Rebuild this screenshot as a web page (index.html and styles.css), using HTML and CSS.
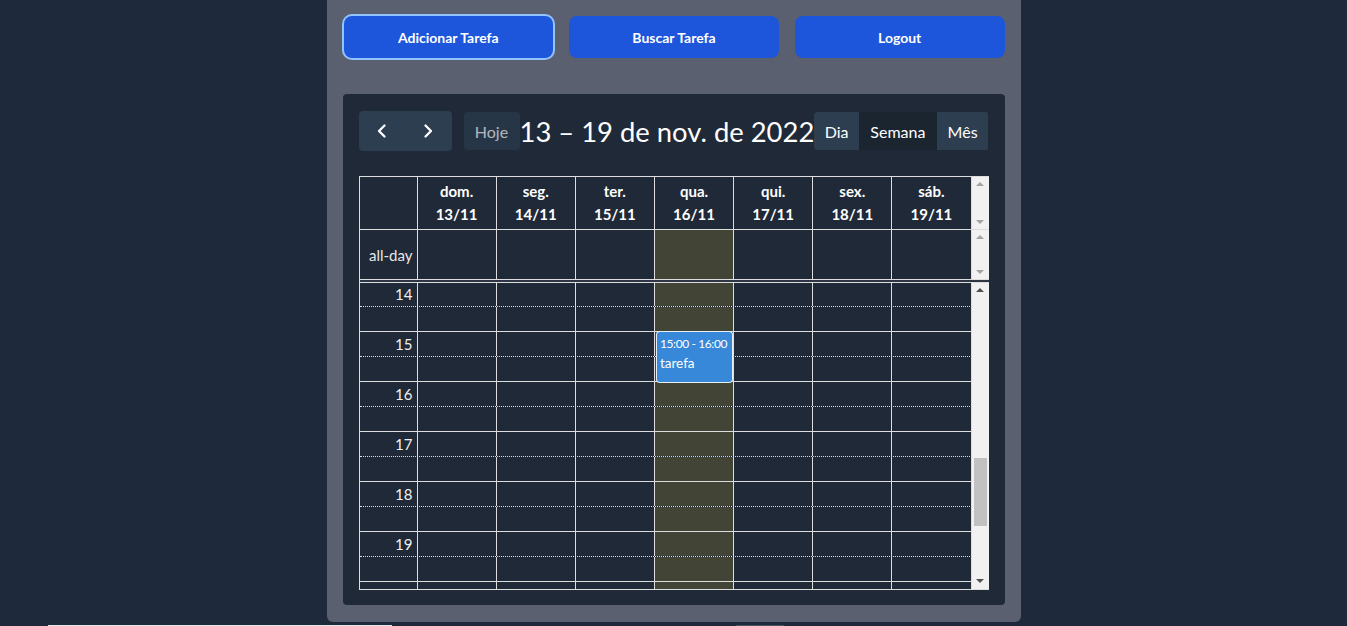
FILE: index.html
```html
<!DOCTYPE html>
<html lang="pt-BR">
<head>
<meta charset="utf-8">
<title>Agenda</title>
<link rel="stylesheet" href="styles.css">
</head>
<body>
<main class="panel">
  <div class="actions">
    <button class="btn btn-focus">Adicionar Tarefa</button>
    <button class="btn">Buscar Tarefa</button>
    <button class="btn">Logout</button>
  </div>
  <section class="card">
    <div class="toolbar">
      <div class="tb-chunk">
        <div class="btn-group nav">
          <button class="fc-btn icon-btn" aria-label="anterior"><svg width="16" height="16" viewBox="0 0 16 16"><path d="M10.5 2.5 L5 8 L10.5 13.5" fill="none" stroke="#fff" stroke-width="2.3" stroke-linecap="round" stroke-linejoin="round"/></svg></button>
          <button class="fc-btn icon-btn" aria-label="próximo"><svg width="16" height="16" viewBox="0 0 16 16"><path d="M5.5 2.5 L11 8 L5.5 13.5" fill="none" stroke="#fff" stroke-width="2.3" stroke-linecap="round" stroke-linejoin="round"/></svg></button>
        </div>
        <button class="fc-btn today-btn" disabled>Hoje</button>
      </div>
      <h2 class="title">13 – 19 de nov. de 2022</h2>
      <div class="btn-group views">
        <button class="fc-btn">Dia</button>
        <button class="fc-btn active">Semana</button>
        <button class="fc-btn">Mês</button>
      </div>
    </div>

    <div class="cal">
      <div class="row-wrap head">
        <div class="cols">
          <div class="cell axis"></div>
          <div class="cell dayhead">dom.<br>13/11</div>
          <div class="cell dayhead">seg.<br>14/11</div>
          <div class="cell dayhead">ter.<br>15/11</div>
          <div class="cell dayhead">qua.<br>16/11</div>
          <div class="cell dayhead">qui.<br>17/11</div>
          <div class="cell dayhead">sex.<br>18/11</div>
          <div class="cell dayhead">sáb.<br>19/11</div>
        </div>
        <div class="sb sb-light"><span class="arr up"></span><span class="arr down"></span></div>
      </div>
      <div class="row-wrap allday">
        <div class="cols">
          <div class="cell axis allday-label">all-day</div>
          <div class="cell"></div>
          <div class="cell"></div>
          <div class="cell"></div>
          <div class="cell today"></div>
          <div class="cell"></div>
          <div class="cell"></div>
          <div class="cell"></div>
        </div>
        <div class="sb sb-light"><span class="arr up"></span><span class="arr down"></span></div>
      </div>
      <div class="divider"></div>
      <div class="row-wrap body">
        <div class="slots">
          <div class="slot-list">
            <div class="cols slot half"><div class="cell axis hour">14</div><div class="cell"></div><div class="cell"></div><div class="cell"></div><div class="cell today"></div><div class="cell"></div><div class="cell"></div><div class="cell"></div></div>
            <div class="cols slot"><div class="cell axis"></div><div class="cell"></div><div class="cell"></div><div class="cell"></div><div class="cell today"></div><div class="cell"></div><div class="cell"></div><div class="cell"></div></div>
            <div class="cols slot half"><div class="cell axis hour">15</div><div class="cell"></div><div class="cell"></div><div class="cell"></div><div class="cell today evt-host"><div class="event"><div class="evt-time">15:00 - 16:00</div><div class="evt-title">tarefa</div></div></div><div class="cell"></div><div class="cell"></div><div class="cell"></div></div>
            <div class="cols slot"><div class="cell axis"></div><div class="cell"></div><div class="cell"></div><div class="cell"></div><div class="cell today"></div><div class="cell"></div><div class="cell"></div><div class="cell"></div></div>
            <div class="cols slot half"><div class="cell axis hour">16</div><div class="cell"></div><div class="cell"></div><div class="cell"></div><div class="cell today"></div><div class="cell"></div><div class="cell"></div><div class="cell"></div></div>
            <div class="cols slot"><div class="cell axis"></div><div class="cell"></div><div class="cell"></div><div class="cell"></div><div class="cell today"></div><div class="cell"></div><div class="cell"></div><div class="cell"></div></div>
            <div class="cols slot half"><div class="cell axis hour">17</div><div class="cell"></div><div class="cell"></div><div class="cell"></div><div class="cell today"></div><div class="cell"></div><div class="cell"></div><div class="cell"></div></div>
            <div class="cols slot"><div class="cell axis"></div><div class="cell"></div><div class="cell"></div><div class="cell"></div><div class="cell today"></div><div class="cell"></div><div class="cell"></div><div class="cell"></div></div>
            <div class="cols slot half"><div class="cell axis hour">18</div><div class="cell"></div><div class="cell"></div><div class="cell"></div><div class="cell today"></div><div class="cell"></div><div class="cell"></div><div class="cell"></div></div>
            <div class="cols slot"><div class="cell axis"></div><div class="cell"></div><div class="cell"></div><div class="cell"></div><div class="cell today"></div><div class="cell"></div><div class="cell"></div><div class="cell"></div></div>
            <div class="cols slot half"><div class="cell axis hour">19</div><div class="cell"></div><div class="cell"></div><div class="cell"></div><div class="cell today"></div><div class="cell"></div><div class="cell"></div><div class="cell"></div></div>
            <div class="cols slot"><div class="cell axis"></div><div class="cell"></div><div class="cell"></div><div class="cell"></div><div class="cell today"></div><div class="cell"></div><div class="cell"></div><div class="cell"></div></div>
            <div class="cols slot half"><div class="cell axis"></div><div class="cell"></div><div class="cell"></div><div class="cell"></div><div class="cell today"></div><div class="cell"></div><div class="cell"></div><div class="cell"></div></div>
            <div class="cols slot"><div class="cell axis"></div><div class="cell"></div><div class="cell"></div><div class="cell"></div><div class="cell today"></div><div class="cell"></div><div class="cell"></div><div class="cell"></div></div>
          </div>
        </div>
        <div class="sb sb-body">
          <span class="arr up dark"></span>
          <span class="thumb"></span>
          <span class="arr down dark"></span>
        </div>
      </div>
    </div>
  </section>
</main>
<div class="footer-strip">
  <span class="strip-light"></span>
  <span class="strip-gray"></span>
</div>
</body>
</html>
```

FILE: styles.css
```css
* { box-sizing: border-box; }

html, body {
  margin: 0;
  padding: 0;
  background: #1e293b;
  font-family: "Lato", "Noto Sans", "Liberation Sans", sans-serif;
  color: #fff;
  overflow: hidden;
}

.panel {
  width: 694px;
  margin: 0 auto;
  background: #5a606f;
  border-radius: 0 0 6px 6px;
  padding: 16px 16px 17px 16px;
}

.actions {
  display: grid;
  grid-template-columns: repeat(3, 1fr);
  gap: 16px;
  padding: 0 0 0 1px;
}

.btn {
  height: 42px;
  border: none;
  border-radius: 8px;
  background: #1d55db;
  color: #fff;
  font-family: inherit;
  font-weight: 700;
  font-size: 14px;
}

.btn-focus {
  box-shadow: 0 0 0 2px #93c5fd;
}

.card {
  margin-top: 36px;
  background: #1f2937;
  border-radius: 4px;
  padding: 16px 16px 15px 16px;
}

.toolbar {
  display: flex;
  align-items: center;
  justify-content: space-between;
  height: 42px;
  margin-bottom: 24px;
}

.tb-chunk {
  display: flex;
  align-items: center;
}

.btn-group {
  display: flex;
  border-radius: 4px;
  overflow: hidden;
}

.fc-btn {
  height: 38px;
  border: none;
  background: #2c3e50;
  color: #fff;
  font-family: inherit;
  font-size: 16px;
  padding: 0 10px;
}

.nav .fc-btn {
  height: 40px;
  width: 46.5px;
  display: flex;
  align-items: center;
  justify-content: center;
}

.today-btn {
  margin-left: 12px;
  border-radius: 4px;
  opacity: 0.65;
  width: 56px;
}

.title {
  margin: 0;
  font-weight: 400;
  font-size: 27.4px;
  color: #fff;
  white-space: nowrap;
}

.views .fc-btn:nth-child(1) { width: 45px; }
.views .fc-btn:nth-child(2) { width: 78px; }
.views .fc-btn:nth-child(3) { width: 52px; }
.views .fc-btn.active { background: #1a252f; }

.cal {
  border: 1px solid #dddddd;
  border-right: none;
  width: 630px;
}

.row-wrap {
  display: flex;
}

.cols {
  flex: 1;
  display: grid;
  grid-template-columns: 58px repeat(7, 1fr);
}

.cell {
  border-right: 1px solid #dddddd;
}

.head {
  height: 53px;
  border-bottom: 1px solid #dddddd;
}

.dayhead {
  text-align: center;
  font-weight: 700;
  font-size: 15px;
  line-height: 23px;
  padding-top: 3px;
  color: #fff;
}

.allday {
  height: 50px;
  border-bottom: 1px solid #dddddd;
}

.allday-label {
  display: flex;
  align-items: center;
  justify-content: flex-end;
  padding-right: 4px;
  padding-top: 0;
  font-size: 15px;
  color: #e6e6e6;
}

.today { background: #424435; }

.divider {
  height: 3px;
  background: #2e3645;
  border-bottom: 1px solid #dddddd;
}

.body {
  height: 306px;
}

.slots {
  flex: 1;
  overflow: hidden;
}

.slot-list {
  margin-top: -1px;
}

.slot {
  height: 25px;
  border-bottom: 1px solid #dddddd;
}

.slot.half {
  border-bottom: 1px dotted #dddddd;
}

.hour {
  text-align: right;
  padding-right: 4px;
  padding-top: 3px;
  font-size: 15px;
  line-height: 18px;
  color: #f0f0f0;
}

.evt-host { position: relative; }

.event {
  position: absolute;
  top: 0;
  left: 2px;
  right: 1px;
  height: 50px;
  background: #3788d8;
  border-radius: 3px;
  box-shadow: 0 0 0 1px #e8eef6;
  padding: 3px 1px 0 3px;
  z-index: 2;
  color: #fff;
}

.evt-time {
  font-size: 12px;
  line-height: 17px;
  letter-spacing: -0.4px;
  white-space: nowrap;
}

.evt-title {
  font-size: 13.5px;
  line-height: 22px;
}

.sb {
  width: 17px;
  flex: none;
  background: #f1f1f1;
  display: flex;
  flex-direction: column;
  justify-content: space-between;
  align-items: center;
  padding: 5px 0;
}

.arr {
  width: 0;
  height: 0;
  border-left: 4px solid transparent;
  border-right: 4px solid transparent;
}

.arr.up { border-bottom: 4px solid #a3a3a3; }
.arr.down { border-top: 4px solid #a3a3a3; }
.arr.up.dark { border-bottom-color: #505050; }
.arr.down.dark { border-top-color: #505050; }

.sb-body {
  justify-content: flex-start;
  padding: 5px 0 6px;
}

.sb-body .thumb {
  width: 13px;
  height: 68px;
  background: #c1c1c1;
  margin-top: 166px;
  margin-bottom: auto;
}

.footer-strip {
  display: flex;
  align-items: flex-start;
  margin-top: 3px;
  height: 10px;
}

.strip-light {
  margin-left: 48px;
  width: 344px;
  height: 10px;
  background: #e5e7eb;
}

.strip-gray {
  margin-left: 344px;
  width: 48px;
  height: 10px;
  background: #4b5260;
}
```
